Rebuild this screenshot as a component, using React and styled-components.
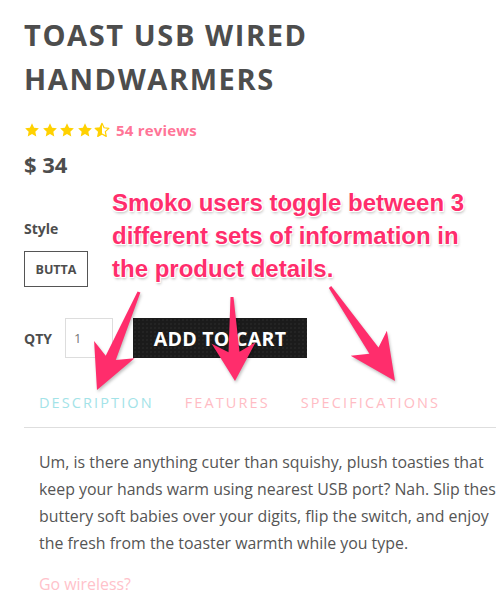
import React from 'react'
import styled, { createGlobalStyle } from 'styled-components'

const GlobalStyle = createGlobalStyle`
  html, body {
    margin: 0;
    padding: 0;
    background: #fff;
    overflow: hidden;
  }
  body {
    font-family: "Open Sans", "Noto Sans", sans-serif;
  }
`;

const Page = styled.div`
  position: relative;
  width: 496px;
  height: 602px;
  overflow: hidden;
  padding: 13px 0 0 24px;
  box-sizing: border-box;
`;

const Title = styled.h1`
  margin: 0;
  font-size: 29px;
  line-height: 44px;
  font-weight: 700;
  letter-spacing: 1.6px;
  color: #4d4d4d;
  text-transform: uppercase;
`;

const RatingRow = styled.div`
  display: flex;
  align-items: center;
  gap: 6px;
  margin-top: 19px;
`;

const Stars = styled.div`
  display: flex;
  gap: 1.5px;
`;

const Reviews = styled.span`
  font-size: 15px;
  font-weight: 700;
  color: #ff7597;
  letter-spacing: 0.2px;
`;

const Price = styled.div`
  margin-top: 9px;
  font-size: 22px;
  font-weight: 700;
  color: #4d4d4d;
`;

const Label = styled.div`
  font-size: 14px;
  font-weight: 700;
  color: #4d4d4d;
  margin-top: ${p => p.$top || 0}px;
`;

const StyleOption = styled.div`
  margin-top: 13px;
  width: 64px;
  height: 36px;
  box-sizing: border-box;
  border: 1px solid #555;
  display: flex;
  align-items: center;
  justify-content: center;
  font-size: 12.5px;
  font-weight: 700;
  color: #4d4d4d;
`;

const BuyRow = styled.div`
  display: flex;
  align-items: center;
  margin-top: 31px;
`;

const QtyInput = styled.div`
  margin-left: 13px;
  width: 48px;
  height: 40px;
  box-sizing: border-box;
  border: 1px solid #ddd;
  display: flex;
  align-items: center;
  padding-left: 8px;
  font-size: 13px;
  color: #777;
`;

const CartButton = styled.div`
  margin-left: 20px;
  width: 174px;
  height: 40px;
  background-color: #1b1b1b;
  background-image: radial-gradient(#2c2c2c 0.6px, transparent 0.8px);
  background-size: 4px 4px;
  color: #fff;
  display: flex;
  align-items: center;
  justify-content: center;
  font-size: 19.5px;
  font-weight: 700;
  letter-spacing: 0.3px;
`;

const Tabs = styled.div`
  display: flex;
  gap: 31px;
  padding: 0 0 15px 15px;
  margin-top: 35px;
  border-bottom: 1px solid #dedede;
`;

const Tab = styled.span`
  font-size: 14.5px;
  letter-spacing: 2.1px;
  color: ${p => (p.$active ? '#a3e3e8' : '#ffbcc4')};
`;

const Body = styled.div`
  padding: 21px 0 0 15px;
`;

const Paragraph = styled.p`
  margin: 0;
  font-size: 15.9px;
  line-height: 27px;
  color: #555;
  white-space: nowrap;
`;

const Wireless = styled.p`
  margin: 16px 0 0;
  font-size: 15.9px;
  color: #ffc2ca;
`;

const Overlay = styled.svg`
  position: absolute;
  left: 0;
  top: 0;
  pointer-events: none;
  filter: drop-shadow(1px 2px 1.5px rgba(0, 0, 0, 0.25));
`;

const Annotation = styled.div`
  position: absolute;
  left: 112px;
  top: 186px;
  font-family: "Liberation Sans", Arial, sans-serif;
  font-weight: 700;
  font-size: 24px;
  line-height: 33px;
  color: #ff2d6c;
  text-shadow: 0 0 2px #fff, 1px 1px 0 #fff, -1px -1px 0 #fff, 1px -1px 0 #fff,
    -1px 1px 0 #fff, 1px 2px 3px rgba(0, 0, 0, 0.3);
  white-space: nowrap;
`;

const starPath = 'M12 2l3.1 6.6 7.2.9-5.3 5 1.4 7.1L12 18.1 5.6 21.6 7 14.5l-5.3-5 7.2-.9z';

const Star = ({ half }) => (
  <svg width="16" height="16" viewBox="0 0 24 24">
    <defs>
      <clipPath id="halfclip">
        <rect x="0" y="0" width="12" height="24" />
      </clipPath>
    </defs>
    {half ? (
      <>
        <path d={starPath} fill="none" stroke="#ffd100" strokeWidth="1.8" strokeLinejoin="round" />
        <path d={starPath} fill="#ffd100" clipPath="url(#halfclip)" />
      </>
    ) : (
      <path d={starPath} fill="#ffd100" />
    )}
  </svg>
);

const arrowPoints = (tail, tip, headLen, headW = 44, shaftTail = 3, shaftHead = 11, notch = 9) => {
  const dx = tip[0] - tail[0];
  const dy = tip[1] - tail[1];
  const len = Math.hypot(dx, dy);
  const d = [dx / len, dy / len];
  const n = [-d[1], d[0]];
  const at = (base, along, side) => [
    base[0] + d[0] * along + n[0] * side,
    base[1] + d[1] * along + n[1] * side,
  ];
  const pts = [
    at(tail, 0, shaftTail / 2),
    at(tip, -(headLen - notch), shaftHead / 2),
    at(tip, -headLen, headW / 2),
    tip,
    at(tip, -headLen, -headW / 2),
    at(tip, -(headLen - notch), -shaftHead / 2),
    at(tail, 0, -shaftTail / 2),
  ];
  return pts.map(p => p.map(v => v.toFixed(1)).join(',')).join(' ');
};

const arrows = [
  { tail: [139, 292], tip: [97, 390], head: 44 },
  { tail: [232, 297], tip: [235, 381], head: 38 },
  { tail: [330, 287], tip: [395, 381], head: 46 },
];

const lines = [
  'Um, is there anything cuter than squishy, plush toasties that',
  'keep your hands warm using nearest USB port? Nah. Slip these',
  'buttery soft babies over your digits, flip the switch, and enjoy',
  'the fresh from the toaster warmth while you type.',
];

const App = () => (
  <>
    <GlobalStyle />
    <Page>
      <Title>
        Toast USB Wired
        <br />
        Handwarmers
      </Title>

      <RatingRow>
        <Stars>
          <Star />
          <Star />
          <Star />
          <Star />
          <Star half />
        </Stars>
        <Reviews>54 reviews</Reviews>
      </RatingRow>

      <Price>$ 34</Price>

      <Label $top={40}>Style</Label>
      <StyleOption>BUTTA</StyleOption>

      <BuyRow>
        <Label>QTY</Label>
        <QtyInput>1</QtyInput>
        <CartButton>ADD TO CART</CartButton>
      </BuyRow>

      <Tabs>
        <Tab $active>DESCRIPTION</Tab>
        <Tab>FEATURES</Tab>
        <Tab>SPECIFICATIONS</Tab>
      </Tabs>

      <Body>
        <Paragraph>
          {lines.map((l, i) => (
            <React.Fragment key={i}>
              {l}
              {i < lines.length - 1 && <br />}
            </React.Fragment>
          ))}
        </Paragraph>
        <Wireless>Go wireless?</Wireless>
      </Body>

      <Overlay width="496" height="602" viewBox="0 0 496 602">
        {arrows.map((a, i) => (
          <polygon key={i} points={arrowPoints(a.tail, a.tip, a.head)} fill="#ff2d6c" />
        ))}
      </Overlay>

      <Annotation>
        Smoko users toggle between 3
        <br />
        different sets of information in
        <br />
        the product details.
      </Annotation>
    </Page>
  </>
)

export default App
